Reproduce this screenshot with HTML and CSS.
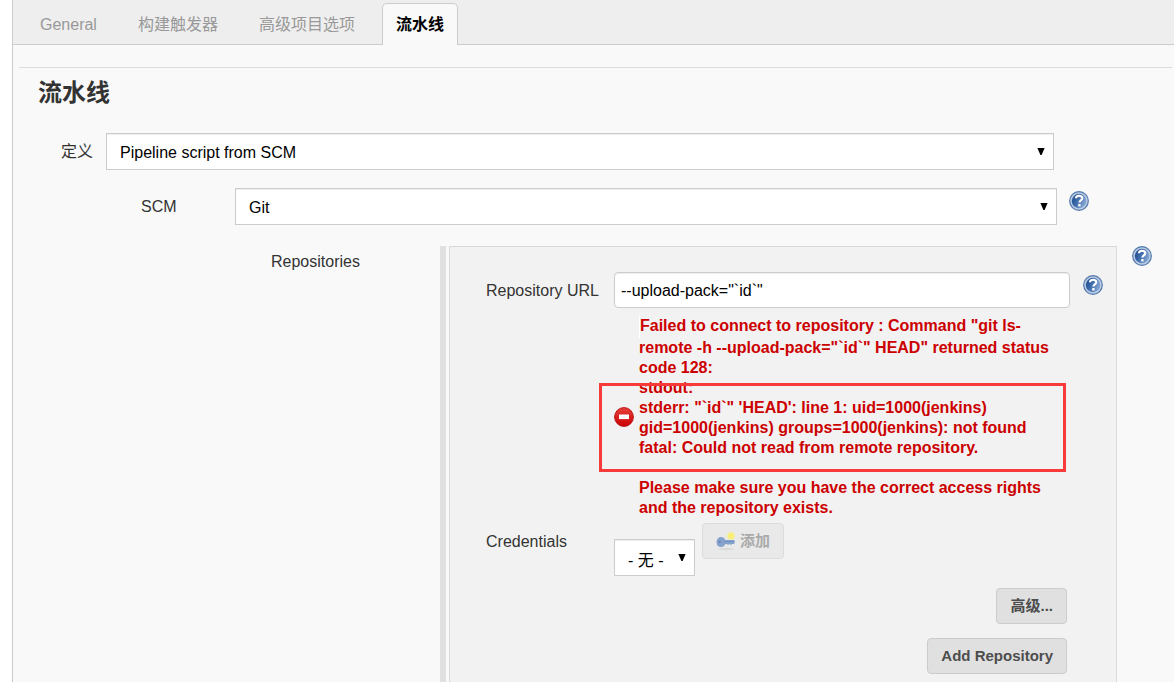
FILE: index.html
```html
<!DOCTYPE html>
<html lang="zh-CN">
<head>
<meta charset="utf-8">
<meta name="viewport" content="width=device-width, initial-scale=1">
<title>流水线</title>
<link rel="stylesheet" href="styles.css">
</head>
<body>
<svg class="defs" aria-hidden="true">
  <defs>
    <linearGradient id="blue" x1="0" y1="0" x2="1" y2="0.4">
      <stop offset="0" stop-color="#1d4686"/>
      <stop offset="0.4" stop-color="#3563a5"/>
      <stop offset="1" stop-color="#7ea0d0"/>
    </linearGradient>
    <linearGradient id="red" x1="0" y1="0" x2="0" y2="1">
      <stop offset="0" stop-color="#e5403c"/>
      <stop offset="1" stop-color="#cc0000"/>
    </linearGradient>
    <radialGradient id="glow">
      <stop offset="0" stop-color="#faf06c"/>
      <stop offset="0.55" stop-color="#f7ee7c"/>
      <stop offset="1" stop-color="#f7ee7c" stop-opacity="0"/>
    </radialGradient>
    <symbol id="help" viewBox="0 0 20 20">
      <circle cx="10" cy="10" r="9.3" fill="#b9cbe3" stroke="#5278ad" stroke-width="1.2"/>
      <circle cx="10" cy="10" r="7.2" fill="url(#blue)"/>
      <path d="M6.900 7.300C7 5.400 8.300 4.700 10 4.700s3.300.9 3.300 2.600c0 2.100-2.900 2.200-2.900 4.200" fill="none" stroke="#fff" stroke-width="2.1"/>
      <rect x="9.200" y="12.900" width="2.400" height="2.600" rx=".6" fill="#fff"/>
    </symbol>
    <symbol id="arrow" viewBox="0 0 8 7">
      <path d="M0.400 0h7.200L4.600 7H3.400z"/>
    </symbol>
  </defs>
</svg>

<main class="panel">
  <nav class="tabs">
    <a class="tab" href="#general">General</a>
    <a class="tab" href="#triggers">构建触发器</a>
    <a class="tab" href="#advanced">高级项目选项</a>
    <a class="tab active" href="#pipeline" aria-current="page">流水线</a>
  </nav>

  <form class="section" id="pipeline">
    <h1 class="title">流水线</h1>

    <div class="row definition">
      <label class="label" for="definition">定义</label>
      <div class="select">
        <select id="definition"><option>Pipeline script from SCM</option></select>
        <svg class="arrow" aria-hidden="true"><use href="#arrow"/></svg>
      </div>
    </div>

    <div class="row scm">
      <label class="label" for="scm">SCM</label>
      <div class="select">
        <select id="scm"><option>Git</option></select>
        <svg class="arrow" aria-hidden="true"><use href="#arrow"/></svg>
      </div>
      <button class="help" type="button" aria-label="Help for SCM"><svg class="icon"><use href="#help"/></svg></button>
    </div>

    <div class="row repositories">
      <span class="label">Repositories</span>
      <div class="handle"></div>
      <div class="repo">
        <div class="field">
          <label class="label" for="url">Repository URL</label>
          <input class="text" id="url" type="text" value="--upload-pack=&quot;`id`&quot;">
          <button class="help" type="button" aria-label="Help for Repository URL"><svg class="icon"><use href="#help"/></svg></button>
        </div>

        <div class="error" role="alert">
          <svg class="icon" viewBox="0 0 20 20" aria-hidden="true">
            <circle cx="10" cy="10" r="9.4" fill="url(#red)" stroke="#b81414" stroke-width="1"/>
            <rect x="5" y="7.500" width="10" height="4.600" fill="#fff"/>
          </svg>
          <p class="message"><span class="spacer"></span>Failed to connect to repository : Command "git ls-remote -h --upload-pack="`id`" HEAD" returned status code 128:<br>stdout:<br>stderr: "`id`" 'HEAD': line 1: uid=1000(jenkins) gid=1000(jenkins) groups=1000(jenkins): not found<br>fatal: Could not read from remote repository.<br><br>Please make sure you have the correct access rights and the repository exists.</p>
          <div class="highlight"></div>
        </div>

        <div class="field credentials">
          <label class="label" for="credentials">Credentials</label>
          <div class="select small">
            <select id="credentials"><option>- 无 -</option></select>
            <svg class="arrow" aria-hidden="true"><use href="#arrow"/></svg>
          </div>
          <button class="button add" type="button" disabled>
            <svg class="key" viewBox="0 0 20 20" aria-hidden="true">
              <ellipse cx="10" cy="18" rx="8" ry="1.200" fill="#dadada"/>
              <circle cx="15" cy="5" r="4.800" fill="url(#glow)"/>
              <path d="M.5 11c0-3 2-5 4.500-5 2.200 0 3.600 1.200 4.300 3H18l1 1.500-1 2.500h-2l-1 1-1.500-1-1.500 1-1.500-1H9.300c-.8 2.200-2.200 3.200-4.300 3-2.500 0-4.500-2-4.500-5z" fill="#86a3cd"/>
              <path d="M8 10.500h10" stroke="#7294c5"/>
              <circle cx="3.600" cy="11" r="1.200" fill="#6785b4"/>
            </svg>
            <span>添加</span>
          </button>
        </div>

        <div class="actions">
          <button class="button" type="button">高级...</button>
          <button class="button" type="button">Add Repository</button>
        </div>
      </div>
      <button class="help" type="button" aria-label="Help for Repositories"><svg class="icon"><use href="#help"/></svg></button>
    </div>
  </form>
</main>
</body>
</html>
```
FILE: styles.css
```css
* { box-sizing: border-box; }

body {
  margin: 0;
  background: #fff;
  color: #333;
  font: 16px/20px "Liberation Sans", Arial, "Noto Sans CJK SC", sans-serif;
}

.defs { position: absolute; width: 0; height: 0; }

.panel {
  min-height: 100vh;
  margin-left: 12px;
  border-left: 1px solid #ccc;
  background: #f9f9f9;
}

.tabs {
  display: flex;
  gap: 13px;
  height: 45px;
  padding: 3px 13px 0;
  border-bottom: 1px solid #ccc;
  background: #eee;
}

.tab {
  height: 42px;
  padding: 11px 13px;
  border: 1px solid transparent;
  border-bottom: 0;
  border-radius: 5px 5px 0 0;
  color: #999;
  text-decoration: none;
  white-space: nowrap;
}

.tab.active {
  border-color: #ccc;
  background: #f9f9f9;
  color: #000;
  font-weight: bold;
}

.section {
  margin: 22px 2px 0 6px;
  border-top: 1px solid #ddd;
}

.title {
  margin: 9px 0 24px 19px;
  font-size: 24px;
  line-height: 32px;
}

.row { display: flex; align-items: flex-start; }
.row > .label { flex: none; padding-top: 9px; }

.definition { padding: 0 118px 0 42px; }
.definition > .label { width: 45px; }

.scm { margin-top: 18px; padding: 0 83px 0 122px; }
.scm > .label { width: 94px; }
.scm > .help { margin: 3px 0 0 12px; }

.repositories { margin-top: 21px; padding: 0 20px 0 252px; }
.repositories > .label { width: 169px; padding-top: 6px; }
.repositories > .help { margin-left: 15px; }

.select { display: grid; flex: 1; align-items: center; }
.select > * { grid-area: 1 / 1; }

.select select {
  width: 100%;
  height: 37px;
  padding: 2px 13px 0;
  border: 1px solid #ccc;
  border-radius: 0;
  appearance: none;
  background: #fff;
  box-shadow: inset 0 1px 1px #eee;
  color: #000;
  font: inherit;
}

.arrow {
  justify-self: end;
  width: 8px;
  height: 7px;
  margin-right: 9px;
  pointer-events: none;
}

.icon { display: block; flex: none; width: 20px; height: 20px; }

.help {
  flex: none;
  padding: 0;
  border: 0;
  background: none;
  cursor: pointer;
}

.handle {
  flex: none;
  align-self: stretch;
  width: 6px;
  margin-right: 3px;
  background: #e0e0e0;
}

.repo {
  flex: 1;
  min-width: 0;
  padding: 25px 13px 8px 36px;
  border: 1px solid #d9d9d9;
  border-bottom: 0;
  background: #f2f2f2;
}

.field { display: flex; align-items: flex-start; }
.field > .label { flex: none; width: 128px; padding-top: 9px; }
.field > .help { margin: 3px 0 0 13px; }

.text {
  flex: 1;
  min-width: 0;
  height: 36px;
  padding: 2px 6px 0;
  border: 1px solid #ccc;
  border-radius: 4px;
  background: #fff;
  box-shadow: inset 0 1px 1px #eee;
  color: #000;
  font: inherit;
}

.error {
  display: flex;
  position: relative;
  align-items: center;
  gap: 5px;
  margin: 8px 33px 0 128px;
}

.message {
  margin: 0;
  color: #c00;
  font-weight: bold;
}

.spacer {
  display: inline-block;
  width: 1px;
  height: 22px;
  background: #fff;
  vertical-align: middle;
}

.highlight {
  position: absolute;
  top: 67px;
  right: 4px;
  left: -15px;
  height: 89px;
  border: 3px solid #f93a3a;
}

.credentials { margin-top: 5px; }

.small { flex: none; width: 81px; margin: 16px 7px 0 0; }
.small select { padding-top: 7px; }

.button {
  height: 36px;
  padding: 0 13px;
  border: 1px solid #ccc;
  border-radius: 4px;
  background: #e0e0e0;
  color: #4d4d4d;
  font: bold 15px/20px "Liberation Sans", Arial, "Noto Sans CJK SC", sans-serif;
  cursor: pointer;
}

.add {
  display: flex;
  align-items: center;
  gap: 4px;
  border-color: #dcdcdc;
  background: #e9e9e9;
  color: #aaa;
  cursor: default;
}

.key { width: 20px; height: 20px; }

.actions {
  display: flex;
  flex-direction: column;
  align-items: flex-end;
  gap: 14px;
  margin: 12px 36px 0 0;
}
```
